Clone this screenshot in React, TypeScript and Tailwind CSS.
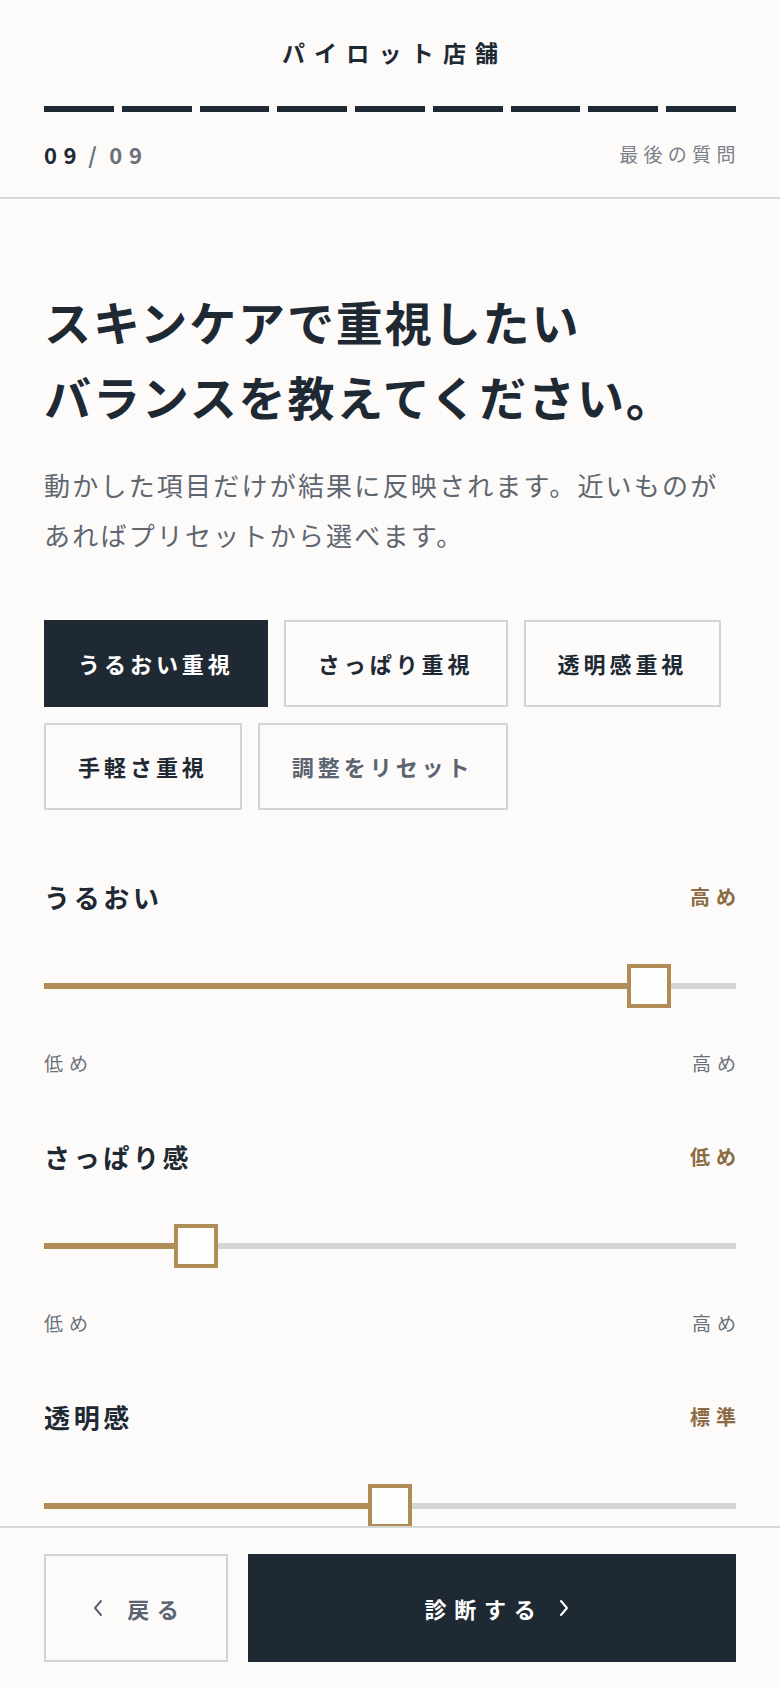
import React from 'react';

const sliders = [
  { label: 'うるおい', value: '高め', v: 90 },
  { label: 'さっぱり感', value: '低め', v: 20 },
  { label: '透明感', value: '標準', v: 50 },
];

const presets = [
  { label: 'うるおい重視', active: true },
  { label: 'さっぱり重視' },
  { label: '透明感重視' },
  { label: '手軽さ重視' },
  { label: '調整をリセット', muted: true },
];

function Chevron({ dir }: { dir: 'left' | 'right' }) {
  return (
    <svg width="10" height="18" viewBox="0 0 10 18" fill="none" stroke="currentColor" strokeWidth="2" strokeLinecap="round" strokeLinejoin="round">
      {dir === 'left' ? <path d="M8 2 L2 9 L8 16" /> : <path d="M2 2 L8 9 L2 16" />}
    </svg>
  );
}

function Slider({ label, value, v }: { label: string; value: string; v: number }) {
  const pos = `calc(${v / 100} * (100% - 44px))`;
  return (
    <div className="flex flex-col">
      <div className="flex h-[39px] items-center justify-between">
        <span className="text-[26px] font-bold tracking-[0.14em] text-[#1f2934]">{label}</span>
        <span className="-mr-[0.3em] text-[20px] font-bold tracking-[0.3em] text-[#8b6c44]">{value}</span>
      </div>
      <div className="relative mt-[48px] flex h-[44px] items-center">
        <div className="h-[6px] w-full bg-[#d4d6d5]" />
        <div className="absolute left-0 top-[19px] h-[6px] bg-[#b08d57]" style={{ width: `calc(${pos} + 22px)` }} />
        <div className="absolute top-0 h-[44px] w-[44px] border-4 border-[#b08d57] bg-[#fdfdfc]" style={{ left: pos }} />
      </div>
      <div className="mt-[41px] flex h-[28px] items-center justify-between text-[19px] tracking-[0.32em] text-[#6b7079]">
        <span>低め</span>
        <span className="-mr-[0.32em]">高め</span>
      </div>
    </div>
  );
}

export default function App() {
  return (
    <div className="flex h-screen flex-col bg-[#fcfbf9] font-['Noto_Sans_CJK_JP','Noto_Sans',sans-serif] text-[#1f2934]">
      <div className="min-h-0 flex-1 overflow-y-auto">
        <header className="border-b-2 border-[#d6d8d6] px-11 pb-[28px] pt-[36px]">
          <div className="h-[32px] pl-[0.4em] text-center text-[23px] font-bold leading-[32px] tracking-[0.4em]">パイロット店舗</div>
          <div className="mt-[38px] flex gap-2">
            {Array.from({ length: 9 }).map((_, i) => (
              <div key={i} className="h-[6px] flex-1 bg-[#1f2934]" />
            ))}
          </div>
          <div className="mt-[27px] flex h-[30px] items-center justify-between">
            <div className="text-[22px] font-bold tracking-[0.3em]">
              <span>09</span>
              <span className="ml-[5px] text-[#6b7079]">/</span>
              <span className="ml-[6px] text-[#6b7079]">09</span>
            </div>
            <div className="-mr-[0.25em] text-[19px] tracking-[0.28em] text-[#7b8089]">最後の質問</div>
          </div>
        </header>

        <main className="px-11 pb-[60px] pt-[84px]">
          <h1 className="text-[47px] font-bold leading-[75px] tracking-[0.04em]">
            スキンケアで重視したい
            <br />
            バランスを教えてください。
          </h1>
          <p className="mt-[27px] text-[26px] leading-[50px] tracking-[0.085em] text-[#5f6670]">
            動かした項目だけが結果に反映されます。近いものが
            <br />
            あればプリセットから選べます。
          </p>

          <div className="mt-[60px] flex flex-wrap gap-4">
            {presets.map((p) => (
              <button
                key={p.label}
                className={
                  p.active
                    ? 'flex h-[87px] items-center justify-center border-2 border-[#1f2934] bg-[#1f2934] px-8 text-[22px] font-bold tracking-[0.18em] text-white'
                    : p.muted
                    ? 'flex h-[87px] items-center justify-center border-2 border-[#d3d5d3] bg-transparent px-8 text-[22px] font-bold tracking-[0.18em] text-[#5b6470]'
                    : 'flex h-[87px] items-center justify-center border-2 border-[#d3d5d3] bg-transparent px-8 text-[22px] font-bold tracking-[0.18em] text-[#1f2934]'
                }
              >
                {p.label}
              </button>
            ))}
          </div>

          <div className="mt-[67px] flex flex-col gap-[60px]">
            {sliders.map((s) => (
              <Slider key={s.label} {...s} />
            ))}
          </div>
        </main>
      </div>

      <footer className="flex shrink-0 gap-5 border-t-2 border-[#d6d8d6] bg-[#fcfbf9] px-11 pb-[26px] pt-[26px]">
        <button className="flex h-[108px] w-[184px] items-center justify-center gap-[24px] border-2 border-[#d3d5d3] text-[22px] font-bold tracking-[0.35em] text-[#5b6470]">
          <Chevron dir="left" />
          <span className="-mr-[0.35em]">戻る</span>
        </button>
        <button className="flex h-[108px] flex-1 items-center justify-center gap-[16px] bg-[#1f2934] pl-[10px] text-[22px] font-bold tracking-[0.35em] text-white">
          <span>診断する</span>
          <Chevron dir="right" />
        </button>
      </footer>
    </div>
  );
}
